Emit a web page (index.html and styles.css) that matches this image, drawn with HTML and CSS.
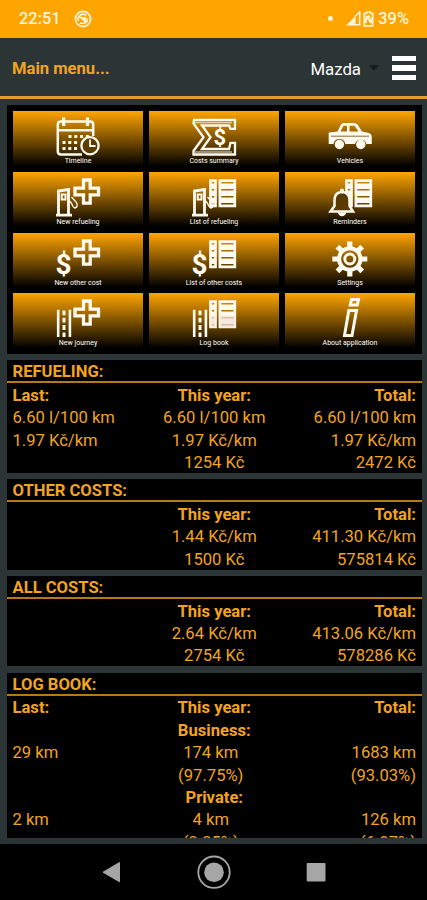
FILE: index.html
```html
<!DOCTYPE html>
<html lang="en">
<head>
<meta charset="utf-8">
<title>Main menu</title>
<link rel="stylesheet" href="styles.css">
</head>
<body>
<svg class="defs" width="0" height="0">
  <defs>
    <path id="plus" d="M30.5 8H37.2V16.1H45.5V22.9H37.2V31.1H30.5V22.9H22V16.1H30.5Z" stroke-width="3.300"/>
    <g id="pump">
      <path d="M5.500 43V19L15.500 17.500V43M3 43.200H19" stroke-width="2.800"/>
      <rect x="8.700" y="22.500" width="3.800" height="5" stroke-width="2"/>
      <path d="M15.500 29C19 29 19 35 21.500 36C24.500 36 25 32 23 30L18.500 25" stroke-width="1.300"/>
    </g>
    <g id="road">
      <path d="M5.200 16.700V44M16.900 16.700V44" stroke-width="2.600"/>
      <path d="M11 17.500V44" stroke-width="3" stroke-dasharray="4.800 2.500"/>
    </g>
    <g id="list" stroke-width="2.700">
      <path d="M21.500 8.700h5v4.200h-5zM21.500 15.700h5v4.200h-5zM21.500 22.700h5v4.200h-5zM21.500 29.700h5v4.200h-5z"/>
      <path d="M30.900 8.700h14.900v4.200h-14.900zM30.900 15.700h14.900v4.200h-14.900zM30.900 22.700h14.900v4.200h-14.900zM30.900 29.700h14.900v4.200h-14.900z"/>
    </g>
  </defs>
</svg>
<div class="status">
  <span class="time">22:51</span>
  <svg class="badge" width="18" height="18" viewBox="0 0 18 18"><circle cx="9" cy="9" r="7.600"/><path d="M4.500 11A5 5 0 0 1 12.500 5.500M13.500 8A5 5 0 0 1 6 12.800M5 6L13 13"/><path d="M7 7L12 7V11Z" class="solid"/></svg>
  <span class="dot"></span>
  <svg class="signal" width="15" height="15" viewBox="0 0 15 15"><path class="solid" d="M0 14.500L9.500 5V14.500Z"/><path d="M9 5.500L13.700 1V13.800H9"/></svg>
  <svg class="battery" width="11" height="16" viewBox="0 0 11 16"><path d="M3.500 2.500V1H7.500V2.500H9.700V15H1.300V2.500ZM3 5L8 12M3 12V7.500L5.500 5L8 8V12"/></svg>
  <span class="percent">39%</span>
</div>
<header class="header">
  <h1>Main menu...</h1>
  <span class="car">Mazda</span>
  <span class="caret"></span>
  <span class="burger"><i></i><i></i><i></i></span>
</header>
<main class="content">
  <nav class="panel menu">
    <a class="tile"><svg viewBox="0 0 50 46"><path d="M29 43.500H8Q4.800 43.500 4.800 40.300V13.500Q4.800 10.500 8 10.500H37Q40.200 10.500 40.200 13.500V25M5 19.200H40" stroke-width="2.500"/><path d="M10.700 6.500V15M34.500 6.500V15" stroke-width="3.200"/><path d="M15.500 25.500H37M9.500 31.500H26M9.500 37.500H26" stroke-width="3" stroke-dasharray="3 2.800"/><circle class="clock" cx="37" cy="34.700" r="8.600" stroke-width="2.300"/><path d="M37 28.500V35H42.500" stroke-width="1.800"/></svg><span>Timeline</span></a>
    <a class="tile"><svg viewBox="0 0 50 46"><path d="M5 8.800H46V17.800H41.500L40 14.500H13L21.500 26.300L13 38H40L41.500 31.800H46V43.500H4.500V40L14.500 26.300L4.500 12.500Z" stroke-width="2.300"/><path d="M6 11.500H43M6 41H43" stroke-width="1.500" opacity=".65"/><text x="30.800" y="33.800" font-size="22">$</text></svg><span>Costs summary</span></a>
    <a class="tile"><svg viewBox="0 0 50 46"><path class="solid" fill-rule="evenodd" d="M3.700 21.500L12.500 20.500L16 13.500Q17 12 19 12H29Q31 12 32.500 13.500L37 20.500L44 22Q46.800 23 46.800 26V33H41.500A6 6 0 0 0 30 33H20.300A6 6 0 0 0 8.500 33H3.700ZM15.500 20.500H22V14.800H18.500ZM24.500 20.500H33.500L29.500 14.800H24.500Z"/><circle class="solid" cx="14.400" cy="33.500" r="4.700"/><circle class="solid" cx="35.800" cy="33.500" r="4.700"/><path class="crease" d="M6 25.200H44"/></svg><span>Vehicles</span></a>
    <a class="tile"><svg viewBox="0 0 50 46"><use href="#pump"/><use href="#plus"/></svg><span>New refueling</span></a>
    <a class="tile"><svg viewBox="0 0 50 46"><use href="#pump"/><use href="#list"/></svg><span>List of refueling</span></a>
    <a class="tile"><svg viewBox="0 0 50 46"><use href="#list"/><path class="bell" d="M5.500 39.500H28L24.500 34V28Q24.500 20.500 17 20Q9.500 20.500 9.500 28V34Z" stroke-width="2.500"/><circle class="solid" cx="17" cy="18.500" r="2"/><path class="solid" d="M12.500 40.500H21.500Q20 44.200 17 44.200T12.500 40.500Z"/></svg><span>Reminders</span></a>
    <a class="tile"><svg viewBox="0 0 50 46"><text x="10.500" y="40.500" font-size="28">$</text><use href="#plus"/></svg><span>New other cost</span></a>
    <a class="tile"><svg viewBox="0 0 50 46"><text x="10.500" y="40.500" font-size="28">$</text><use href="#list"/></svg><span>List of other costs</span></a>
    <a class="tile"><svg viewBox="0 0 50 46"><circle cx="24.800" cy="26" r="10.700" stroke-width="4"/><circle cx="24.800" cy="26" r="5" stroke-width="3"/><g stroke-width="5.200"><path d="M24.800 8.500V15M24.800 37V43.500M7.300 26H14M35.600 26H42.300M12.400 13.600L17 18.200M32.600 33.800L37.200 38.400M12.400 38.400L17 33.800M32.600 18.200L37.200 13.600"/></g></svg><span>Settings</span></a>
    <a class="tile"><svg viewBox="0 0 50 46"><use href="#road"/><use href="#plus"/></svg><span>New journey</span></a>
    <a class="tile"><svg viewBox="0 0 50 46"><use href="#road"/><use href="#list"/><path class="shade" d="M21.500 22.500h5v12h-5zM31 22.500h15v12h-15z"/></svg><span>Log book</span></a>
    <a class="tile"><svg viewBox="0 0 50 46"><path d="M26.500 6.500H33.500L32.300 12H25.200ZM23.800 17.500H31.500L27 42.500H19.500Z" stroke-width="3"/></svg><span>About application</span></a>
  </nav>
  <section class="panel">
    <h2>REFUELING:</h2>
    <div class="grid">
      <b>Last:</b><b>This year:</b><b>Total:</b>
      <span>6.60 l/100 km</span><span>6.60 l/100 km</span><span>6.60 l/100 km</span>
      <span>1.97 Kč/km</span><span>1.97 Kč/km</span><span>1.97 Kč/km</span>
      <span></span><span>1254 Kč</span><span>2472 Kč</span>
    </div>
  </section>
  <section class="panel">
    <h2>OTHER COSTS:</h2>
    <div class="grid">
      <b></b><b>This year:</b><b>Total:</b>
      <span></span><span>1.44 Kč/km</span><span>411.30 Kč/km</span>
      <span></span><span>1500 Kč</span><span>575814 Kč</span>
    </div>
  </section>
  <section class="panel">
    <h2>ALL COSTS:</h2>
    <div class="grid">
      <b></b><b>This year:</b><b>Total:</b>
      <span></span><span>2.64 Kč/km</span><span>413.06 Kč/km</span>
      <span></span><span>2754 Kč</span><span>578286 Kč</span>
    </div>
  </section>
  <section class="panel last">
    <h2>LOG BOOK:</h2>
    <div class="grid">
      <b>Last:</b><b>This year:</b><b>Total:</b>
      <b></b><b>Business:</b><b></b>
      <span>29 km</span><span class="km">174 km</span><span>1683 km</span>
      <span></span><span class="km">(97.75%)</span><span>(93.03%)</span>
      <b></b><b>Private:</b><b></b>
      <span>2 km</span><span class="km">4 km</span><span>126 km</span>
      <span></span><span class="km">(2.25%)</span><span>(6.97%)</span>
    </div>
  </section>
</main>
<footer class="navbar">
  <svg width="427" height="56" viewBox="0 0 427 56"><path d="M103 28.200L119.500 18.500V37.800Z" fill="#a6a6a6" stroke="#a6a6a6" stroke-linejoin="round"/><circle cx="214" cy="28.200" r="15.700" fill="none" stroke="#a6a6a6" stroke-width="1.800"/><circle cx="214" cy="28.200" r="9.800" fill="#a6a6a6"/><rect x="306.700" y="19" width="18.800" height="18.500" rx="1" fill="#a6a6a6"/></svg>
</footer>
</body>
</html>
```
FILE: styles.css
```css
* { box-sizing: border-box; }
body {
  margin: 0;
  width: 427px;
  height: 900px;
  overflow: hidden;
  display: flex;
  flex-direction: column;
  background: #2b3535;
  color: #f2a41e;
  font: 16.600px/22.400px Roboto, sans-serif;
}
.defs { display: none; }
h1, h2 { margin: 0; font-size: 16.600px; font-weight: 700; }

.status {
  flex: none;
  height: 37.500px;
  padding: 0 18px 0 19px;
  display: flex;
  align-items: center;
  background: #ffa500;
  color: #fff5dc;
  font-size: 16.400px;
  font-weight: 500;
}
.status svg { fill: none; stroke: #fff5dc; stroke-width: 1.600; }
.status svg .solid { fill: #fff5dc; stroke: none; }
.badge { margin-left: 13px; }
.dot { width: 5px; height: 5px; margin-left: auto; border-radius: 50%; background: #fff5dc; }
.signal { margin-left: 13px; }
.battery { margin: 0 4px 0 2px; }

.header {
  flex: none;
  height: 61.500px;
  padding: 0 11px 0 12px;
  display: flex;
  align-items: center;
  border-bottom: 3px solid #dda029;
}
.header h1 { flex: 1; padding-top: 4px; }
.car { padding-top: 4px; color: #fff; font-size: 16.800px; }
.caret { margin: 3px 13px 0 8px; border: 5px solid transparent; border-top: 6px solid #171d1d; border-bottom: 0; }
.burger { width: 24px; display: flex; flex-direction: column; gap: 4px; padding-top: 2px; }
.burger i { height: 5.500px; background: #fff; }

.content {
  flex: 1;
  min-height: 0;
  padding: 6px 5.500px 6px 7px;
  display: flex;
  flex-direction: column;
  gap: 6.300px;
}
.panel { flex: none; background: #000; }
.panel.last { flex: 1; min-height: 0; overflow: hidden; }
.menu {
  height: 248.700px;
  padding: 6px;
  display: grid;
  grid-template-columns: repeat(3, 130px);
  grid-auto-rows: 54.500px;
  gap: 6.300px 6px;
}
.tile {
  display: flex;
  flex-direction: column;
  align-items: center;
  background: linear-gradient(#ffa500, #000);
  color: #fff;
}
.tile svg {
  flex: none;
  width: 50px;
  height: 46px;
  fill: none;
  stroke: #fffaf0;
}
.tile svg .solid { fill: #fffaf0; stroke: none; }
.tile svg text {
  fill: #fffaf0;
  stroke: none;
  text-anchor: middle;
  font-family: Roboto, sans-serif;
  font-weight: 700;
}
.tile svg .crease { stroke: #8a6a30; stroke-width: 1; }
.tile svg .bell { fill: #593a00; }
.tile svg .clock { fill: #5a3b00; }
.tile svg .shade { fill: #f3e3d8; fill-opacity: .75; stroke: none; }
.tile span { padding-top: 1px; font-size: 7px; line-height: 7px; white-space: nowrap; }

.panel h2 {
  height: 23.300px;
  padding: 1px 5.500px 0;
  border-bottom: 2px solid #b57b10;
}
.grid {
  display: grid;
  grid-template-columns: repeat(3, 1fr);
  grid-auto-rows: 22.400px;
  margin-bottom: -1.500px;
  padding: 1.500px 5.500px 0;
}
.grid > * { white-space: nowrap; }
.grid b { font-weight: 700; }
.grid > :nth-child(3n+2) { text-align: center; }
.grid > :nth-child(3n) { text-align: right; }
.grid .km { padding-right: 7px; }
.navbar { flex: none; height: 56px; background: #000; }
.navbar svg { display: block; }
```
